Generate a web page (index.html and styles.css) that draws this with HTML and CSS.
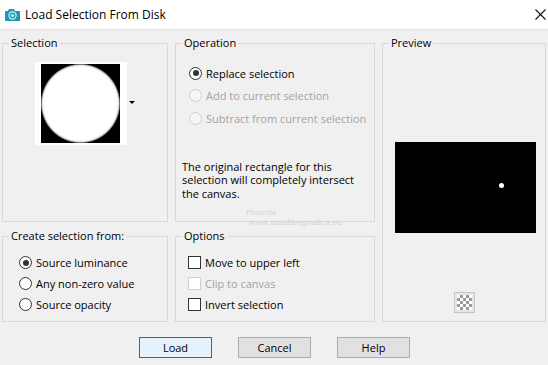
FILE: index.html
```html
<!DOCTYPE html>
<html lang="en">
<head>
  <meta charset="UTF-8">
  <title>Load Selection From Disk</title>
  <link rel="stylesheet" href="styles.css">
</head>
<body>
  <div class="titlebar">
    <svg class="app-icon" width="17" height="12" viewBox="0 0 17 12">
      <path d="M1 2h3l1-2h5l1 2h5v10H1z" fill="#1b9ab4"/>
      <circle cx="8.5" cy="6.5" r="3.6" fill="none" stroke="#d6f1f6" stroke-width="1.2"/>
      <circle cx="8.5" cy="6.5" r="1.6" fill="#d6f1f6"/>
    </svg>
    <span class="title">Load Selection From Disk</span>
    <svg class="close" width="11" height="11" viewBox="0 0 11 11">
      <path d="M0.5 0.5l10 10M10.5 0.5l-10 10" stroke="#111" stroke-width="1.1"/>
    </svg>
  </div>

  <div class="dialog">
    <fieldset class="group selection">
      <legend>Selection</legend>
      <div class="thumb-row">
        <div class="thumb"><div class="thumb-img"></div></div>
        <span class="drop-arrow"></span>
      </div>
    </fieldset>

    <fieldset class="group operation">
      <legend>Operation</legend>
      <div class="group-body">
        <div class="choice"><span class="radio checked"></span>Replace selection</div>
        <div class="choice disabled"><span class="radio"></span>Add to current selection</div>
        <div class="choice disabled"><span class="radio"></span>Subtract from current selection</div>
        <p class="note">The original rectangle for this selection will completely intersect the canvas.</p>
      </div>
      <div class="watermark">
        <span class="wm-name">Pinuccia</span>
        <span class="wm-url">www.maidiregrafica.eu</span>
      </div>
    </fieldset>

    <fieldset class="group preview">
      <legend>Preview</legend>
      <div class="preview-img"><span class="dot"></span></div>
      <div class="checker-btn"><span class="checker"></span></div>
    </fieldset>

    <fieldset class="group create">
      <legend>Create selection from:</legend>
      <div class="group-body">
        <div class="choice row"><span class="radio checked"></span>Source luminance</div>
        <div class="choice row"><span class="radio"></span>Any non-zero value</div>
        <div class="choice row"><span class="radio"></span>Source opacity</div>
      </div>
    </fieldset>

    <fieldset class="group options">
      <legend>Options</legend>
      <div class="group-body">
        <div class="choice row"><span class="check"></span>Move to upper left</div>
        <div class="choice row disabled"><span class="check"></span>Clip to canvas</div>
        <div class="choice row"><span class="check"></span>Invert selection</div>
      </div>
    </fieldset>
  </div>

  <div class="buttons">
    <button class="btn default">Load</button>
    <button class="btn">Cancel</button>
    <button class="btn">Help</button>
  </div>
</body>
</html>
```

FILE: styles.css
```css
:root {
  --face: #f0f0f0;
  --line: #d9d9d9;
  --text: #000;
  --gray: #a3a3a3;
}

body {
  margin: 0;
  width: 548px;
  height: 365px;
  overflow: hidden;
  background: var(--face);
  color: var(--text);
  font-family: 'Open Sans', 'Noto Sans', sans-serif;
  font-size: 11px;
}

.titlebar {
  height: 29px;
  background: #fff;
  border-bottom: 1px solid #e3e3e3;
  display: flex;
  align-items: center;
  padding-left: 4px;
}

.app-icon {
  margin-right: 4px;
}

.title {
  font-size: 12px;
  flex: 1;
}

.close {
  margin-right: 2px;
}

.dialog {
  display: grid;
  grid-template-columns: 166px 200px 164px;
  grid-template-rows: 187px 94px;
  column-gap: 7px;
  row-gap: 6px;
  padding: 5px 0 0 2px;
}

.group {
  margin: 0;
  padding: 0;
  min-width: 0;
  border: 1px solid var(--line);
  position: relative;
}

.group legend {
  margin-left: 6px;
  padding: 0 2px;
  line-height: 16px;
  font-size: 11px;
}

.selection { grid-column: 1; grid-row: 1; }
.operation { grid-column: 2; grid-row: 1; }
.preview { grid-column: 3; grid-row: 1 / 3; }
.create { grid-column: 1; grid-row: 2; }
.options { grid-column: 2; grid-row: 2; }

.operation .group-body { padding: 11px 0 0 13px; }
.create .group-body { padding: 8px 0 0 16px; }
.options .group-body { padding: 8px 0 0 12px; }

/* selection thumbnail */
.thumb-row {
  display: flex;
  align-items: flex-start;
  padding: 11px 0 0 32px;
}

.thumb {
  background: #fff;
  padding: 2px 7px 2px 6px;
}

.thumb-img {
  width: 79px;
  height: 79px;
  background: radial-gradient(circle closest-side, #fff 0, #fff 93%, #d8d8d8 97%, #000 101%);
}

.drop-arrow {
  margin: 39px 0 0 2px;
  border-left: 3px solid transparent;
  border-right: 3px solid transparent;
  border-top: 3px solid #000;
}

/* radios and checkboxes */
.choice {
  display: flex;
  align-items: center;
  height: 22.5px;
  white-space: nowrap;
}

.choice.row {
  height: 21px;
}

.choice.disabled {
  color: var(--gray);
}

.radio {
  width: 11px;
  height: 11px;
  border: 1px solid #333;
  border-radius: 50%;
  background: #fff;
  margin-right: 4px;
  display: flex;
  align-items: center;
  justify-content: center;
  flex: none;
}

.radio.checked::after {
  content: '';
  width: 6px;
  height: 6px;
  border-radius: 50%;
  background: #333;
}

.disabled .radio {
  border-color: #cfcfcf;
  background: #f6f6f6;
}

.check {
  width: 11px;
  height: 11px;
  border: 1px solid #333;
  background: #fff;
  margin-right: 4px;
  flex: none;
}

.disabled .check {
  border-color: #cfcfcf;
}

.note {
  margin: 30px 0 0 -7px;
  width: 190px;
  line-height: 13.5px;
}

.watermark {
  position: absolute;
  left: 40px;
  top: 158px;
  color: #d2d2d2;
  font-family: 'DejaVu Serif', serif;
  line-height: 9px;
}

.wm-name {
  display: block;
  padding-left: 30px;
  font-size: 7px;
  font-style: italic;
}

.wm-url {
  display: block;
  padding-left: 32px;
  font-size: 8px;
}

/* preview */
.preview-img {
  width: 141px;
  height: 91px;
  margin: 91px 0 0 12px;
  background: #000;
  position: relative;
}

.dot {
  position: absolute;
  left: 104px;
  top: 41px;
  width: 5px;
  height: 5px;
  border-radius: 50%;
  background: #fff;
}

.checker-btn {
  width: 19px;
  height: 19px;
  margin: 59px auto 0;
  border: 1px solid #c4c4c4;
  background: #e6e6e6;
  display: flex;
  align-items: center;
  justify-content: center;
}

.checker {
  width: 15px;
  height: 15px;
  background-color: #fff;
  background-image: conic-gradient(#9a9a9a 25%, #fff 0 50%, #9a9a9a 0 75%, #fff 0);
  background-size: 6px 6px;
}

/* bottom buttons */
.buttons {
  display: flex;
  gap: 26px;
  padding: 15px 0 0 139px;
}

.btn {
  width: 73px;
  height: 21px;
  padding: 0;
  font-family: inherit;
  font-size: 11px;
  color: #000;
  background: #e1e1e1;
  border: 1px solid #adadad;
}

.btn.default {
  background: #e5f1fb;
  border-color: #0078d7;
}
```
